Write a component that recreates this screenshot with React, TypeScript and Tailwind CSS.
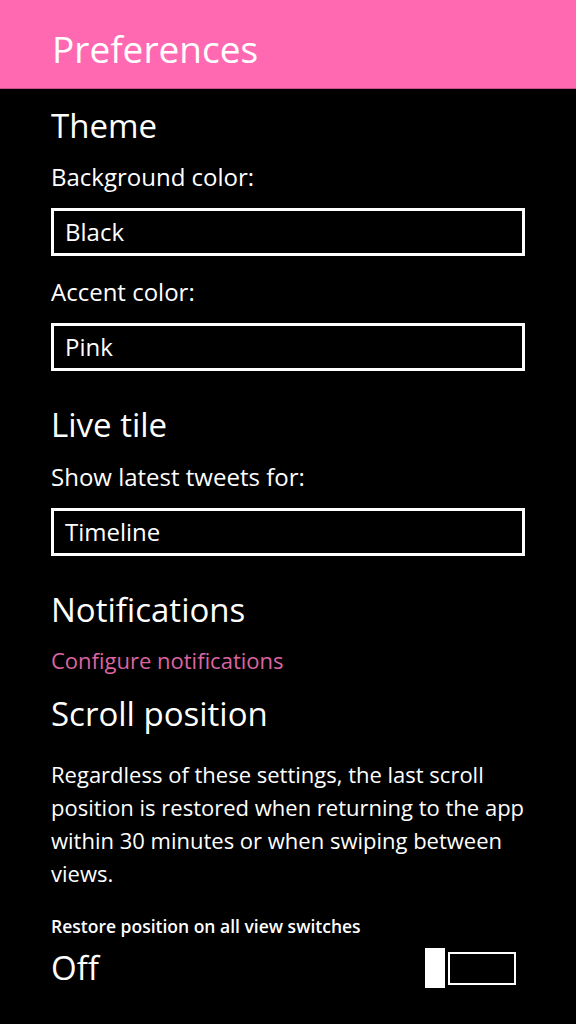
const Box = ({ value }: { value: string }) => (
  <div className="mt-[16px] h-[48px] w-[474px] border-[3px] border-white flex items-center px-[11px] text-[24px] text-white">
    {value}
  </div>
);

const Heading = ({ children }: { children: string }) => (
  <h2 className="text-[33px] leading-[40px] text-white">{children}</h2>
);

const Label = ({ children }: { children: string }) => (
  <p className="text-[24px] leading-[30px] text-white">{children}</p>
);

export default function App() {
  return (
    <div
      className="w-[576px] h-[1024px] bg-black overflow-hidden"
      style={{ fontFamily: '"Segoe UI", "Open Sans", sans-serif' }}
    >
      <header className="h-[89px] bg-[#ff69b2] border-b border-[#c9528a] px-[52px] pt-[25px]">
        <h1 className="text-[37px] leading-[48px] text-white">Preferences</h1>
      </header>

      <main className="px-[51px]">
        <section className="pt-[17px]">
          <Heading>Theme</Heading>
          <div className="mt-[16px]">
            <Label>Background color:</Label>
          </div>
          <Box value="Black" />
          <div className="mt-[21px]">
            <Label>Accent color:</Label>
          </div>
          <Box value="Pink" />
        </section>

        <section className="pt-[34px]">
          <Heading>Live tile</Heading>
          <div className="mt-[17px]">
            <Label>Show latest tweets for:</Label>
          </div>
          <Box value="Timeline" />
        </section>

        <section className="pt-[34px]">
          <Heading>Notifications</Heading>
          <p className="mt-[15px] text-[22px] leading-[30px] text-[#dc64a2]">Configure notifications</p>
        </section>

        <section className="pt-[19px]">
          <Heading>Scroll position</Heading>
          <p className="mt-[24px] text-[22px] leading-[33px] text-white">
            Regardless of these settings, the last scroll position is restored when returning to the app
            within 30 minutes or when swiping between views.
          </p>
          <p className="mt-[25px] text-[17.5px] leading-[22px] font-semibold text-white">
            Restore position on all view switches
          </p>
          <div className="mt-[11px] flex items-center justify-between pr-[9px]">
            <span className="text-[33px] leading-[40px] text-white">Off</span>
            <div className="flex items-center">
              <div className="h-[40px] w-[20px] bg-white" />
              <div className="ml-[3px] h-[33px] w-[68px] border-2 border-white" />
            </div>
          </div>
        </section>
      </main>
    </div>
  );
}
